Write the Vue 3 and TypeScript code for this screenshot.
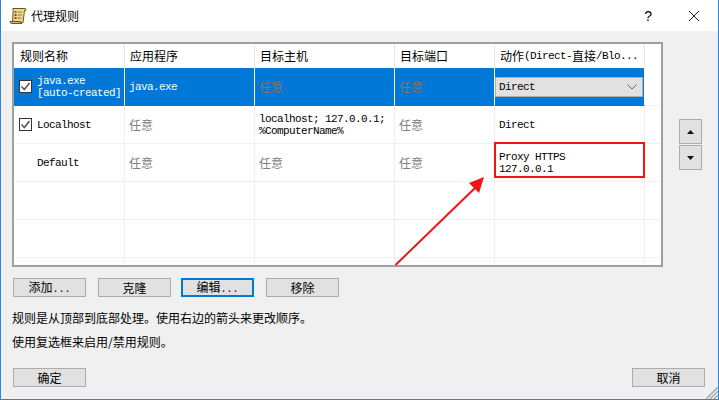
<script setup lang="ts">
interface Rule {
  name: string[]
  check: boolean
  app: string
  host: string[]
  port: string
  action: string[]
  selected?: boolean
}

const rules: Rule[] = [
  { name: ['java.exe', '[auto-created]'], check: true, app: 'java.exe', host: [], port: '任意', action: ['Direct'], selected: true },
  { name: ['Localhost'], check: true, app: '', host: ['localhost; 127.0.0.1;', '%ComputerName%'], port: '任意', action: ['Direct'] },
  { name: ['Default'], check: false, app: '', host: [], port: '任意', action: ['Proxy HTTPS', '127.0.0.1'] },
]
const emptyRows = [1, 2, 3]
const headers = ['规则名称', '应用程序', '目标主机', '目标端口']
const actions = [
  { label: '添加', dots: true },
  { label: '克隆', dots: false },
  { label: '编辑', dots: true },
  { label: '移除', dots: false },
]
</script>

<template>
  <div class="window">
    <header class="titlebar">
      <svg class="app-icon" width="18" height="18" viewBox="0 0 18 18">
        <path d="M4 1.500h12c1 0 1.300 1 .8 1.800H15.500L14 15.500H3.500L4.200 3.200C4.200 2.400 3.500 1.500 4 1.500z" fill="#f0d98f" stroke="#6b5320" stroke-width="1" />
        <path d="M1 14.500h10.500c.2 1 .6 1.800 1.300 2H2.500C1.500 16.500.8 15.500 1 14.500z" fill="#d8b96a" stroke="#6b5320" stroke-width="1" />
        <rect x="5.500" y="4" width="2" height="2" fill="#1fa03a" />
        <rect x="5.500" y="7" width="2" height="2" fill="#d8281e" />
        <rect x="5.500" y="10" width="2" height="2" fill="#d8281e" />
        <path d="M8.500 5h4.500M8.500 8h4.500M8.500 11h4" stroke="#8a7a48" stroke-width="1" />
      </svg>
      <span class="title">代理规则</span>
      <span class="help">?</span>
      <svg class="close" width="12" height="12" viewBox="0 0 12 12">
        <path d="M1 1l10 10M11 1L1 11" stroke="#222" stroke-width="1" fill="none" />
      </svg>
    </header>

    <main class="content">
      <div class="list-area">
        <div class="list">
          <div class="row head">
            <div v-for="h in headers" :key="h" class="cell head-cell">{{ h }}</div>
            <div class="cell head-cell mono"><span class="cjk">动作</span>(Direct-<span class="cjk">直接</span>/Blo...</div>
            <div class="cell filler"></div>
          </div>

          <div v-for="r in rules" :key="r.name[0]" class="row" :class="{ selected: r.selected }">
            <div class="cell name-cell">
              <span class="check-slot">
                <span v-if="r.check" class="check">
                  <svg width="11" height="11" viewBox="0 0 11 11">
                    <path d="M1.500 5.500l2.800 3L9.500 2" stroke="#555" stroke-width="1.600" fill="none" />
                  </svg>
                </span>
              </span>
              <div class="mono name-text"><div v-for="n in r.name" :key="n">{{ n }}</div></div>
            </div>
            <div class="cell" :class="r.app ? 'mono' : 'any'">{{ r.app || '任意' }}</div>
            <div class="cell" :class="r.host.length ? 'mono' : 'any'">
              <template v-if="r.host.length"><div class="lines"><div v-for="h in r.host" :key="h">{{ h }}</div></div></template>
              <template v-else>任意</template>
            </div>
            <div class="cell any">{{ r.port }}</div>
            <div class="cell action mono">
              <div v-if="r.selected" class="combo">
                <span>Direct</span>
                <svg width="10" height="6" viewBox="0 0 10 6"><path d="M.5.5L5 5 9.500.5" stroke="#666" fill="none" /></svg>
              </div>
              <div v-else class="lines"><div v-for="a in r.action" :key="a">{{ a }}</div></div>
            </div>
            <div class="cell filler"></div>
          </div>

          <div v-for="e in emptyRows" :key="e" class="row">
            <div class="cell"></div><div class="cell"></div><div class="cell"></div><div class="cell"></div><div class="cell"></div><div class="cell filler"></div>
          </div>
        </div>

        <div class="order">
          <button class="btn order-btn">
            <svg width="7" height="4" viewBox="0 0 7 4"><path d="M3.500 0L7 4H0z" fill="#111" /></svg>
          </button>
          <button class="btn order-btn">
            <svg width="7" height="4" viewBox="0 0 7 4"><path d="M0 0h7L3.500 4z" fill="#111" /></svg>
          </button>
        </div>
      </div>

      <div class="actions">
        <button v-for="a in actions" :key="a.label" class="btn wide" :class="{ focused: a.label === '编辑' }"><span>{{ a.label }}<span v-if="a.dots" class="dots">...</span></span></button>
      </div>

      <p class="note first">规则是从顶部到底部处理。使用右边的箭头来更改顺序。</p>
      <p class="note second">使用复选框来启用/禁用规则。</p>

      <div class="footer">
        <button class="btn wide">确定</button>
        <button class="btn wide">取消</button>
      </div>
    </main>

    <div class="callout"></div>
    <svg class="arrow" width="100" height="95" viewBox="0 0 100 95">
      <path d="M1.500 91L82 13" stroke="#f01414" stroke-width="2" fill="none" />
      <path d="M90 3L75 9L85 19z" fill="#f01414" />
    </svg>
    <svg class="grip" width="12" height="12" viewBox="0 0 12 12">
      <path d="M0 12L12 0M4 12L12 4M8 12L12 8" stroke="#a8a8a8" stroke-width="1.500" fill="none" />
    </svg>
  </div>
</template>

<style scoped>
.window {
  position: relative;
  box-sizing: border-box;
  width: 719px;
  height: 400px;
  overflow: hidden;
  background: #f0f0f0;
  border-left: 1px solid #2b86d6;
  border-right: 1px solid #2b86d6;
  border-bottom: 1px solid #2b86d6;
  font-family: "Noto Sans CJK SC", sans-serif;
  font-size: 12px;
  color: #000;
}
.titlebar {
  display: flex;
  align-items: center;
  height: 31px;
  margin-left: -1px;
  margin-right: -1px;
  padding-left: 9px;
  background: #fff;
}
.app-icon { flex: none; }
.title { margin-left: 4px; }
.help { margin-left: auto; margin-right: 36px; font-size: 14px; line-height: 1; font-family: "Liberation Sans", sans-serif; }
.close { margin-right: 19px; }
.content {
  display: flex;
  flex-direction: column;
  padding: 11px 13px 0 11px;
}
.list-area { display: flex; }
.list {
  box-sizing: border-box;
  width: 651px;
  height: 225px;
  flex: none;
  overflow: hidden;
  background: #fff;
  border: 2px solid #9aa0a6;
}
.row {
  display: grid;
  grid-template-columns: 111px 130px 140px 100px 150px 1fr;
  height: 38px;
}
.row.head { height: 24px; }
.cell {
  box-sizing: border-box;
  display: flex;
  align-items: center;
  padding-left: 4px;
  border-right: 1px solid #f0f0f0;
  border-bottom: 1px solid #f0f0f0;
  min-width: 0;
  line-height: 12px;
  white-space: nowrap;
}
.head-cell { padding-left: 5px; border-bottom: none; border-right-color: #e6e6e6; font-size: 12px; }
.head-cell:first-child { padding-left: 6px; }
.filler { border-right: none; }
.head .filler { border-bottom: none; }
.mono {
  font-family: "Liberation Mono", "Noto Sans CJK SC", monospace;
  font-size: 11px;
  letter-spacing: -0.6px;
}
.cjk { font-family: "Noto Sans CJK SC", sans-serif; font-size: 12px; letter-spacing: 0; }
.dots { font-family: "Liberation Mono", monospace; font-size: 10px; }
.any { color: #808080; font-size: 12px; }
.name-cell { padding-left: 5px; }
.check-slot { flex: none; width: 18px; height: 13px; display: flex; }
.check {
  box-sizing: border-box;
  width: 13px;
  height: 13px;
  background: #fff;
  border: 1px solid #333;
  display: flex;
  align-items: center;
  justify-content: center;
}
.name-text { line-height: 12px; }
.selected .cell:not(.filler) {
  background: #0078d7;
  color: #fff;
  border-right-color: #fff;
  border-bottom-color: #0078d7;
}
.selected .any { color: #7f7468 !important; }
.selected .action { padding-left: 0; border-right-color: #0078d7; }
.combo {
  box-sizing: border-box;
  width: 148px;
  height: 20px;
  display: flex;
  align-items: center;
  justify-content: space-between;
  padding: 0 5px 0 3px;
  background: #e1e1e1;
  border: 1px solid #adadad;
  color: #000;
}
.order {
  display: flex;
  flex-direction: column;
  gap: 1px;
  margin: 77px 0 0 16px;
}
.btn {
  box-sizing: border-box;
  padding: 0;
  margin: 0;
  display: flex;
  align-items: center;
  justify-content: center;
  background: #e1e1e1;
  border: 1px solid #adadad;
  border-radius: 0;
  font-family: inherit;
  font-size: 12px;
  line-height: 1;
  color: #000;
}
.order-btn { width: 23px; height: 25px; }
.wide { width: 73px; height: 19px; }
.focused { border: 2px solid #0078d7; }
.actions {
  display: flex;
  margin: 11px 0 0 1px;
  gap: 12px;
}
.actions .btn:nth-child(2) { margin-right: -2px; }
.note { margin: 0; line-height: 16px; }
.note.first { margin-top: 13px; }
.note.second { margin-top: 8px; }
.footer {
  display: flex;
  justify-content: space-between;
  margin: 18px 0 0 1px;
}
.callout {
  position: absolute;
  left: 493px;
  top: 142px;
  width: 147px;
  height: 32px;
  border: 2px solid #f01414;
}
.arrow { position: absolute; left: 393px; top: 174px; }
.grip { position: absolute; right: 0; bottom: 0; }
</style>

<style>
html, body { margin: 0; padding: 0; background: #f0f0f0; }
</style>
